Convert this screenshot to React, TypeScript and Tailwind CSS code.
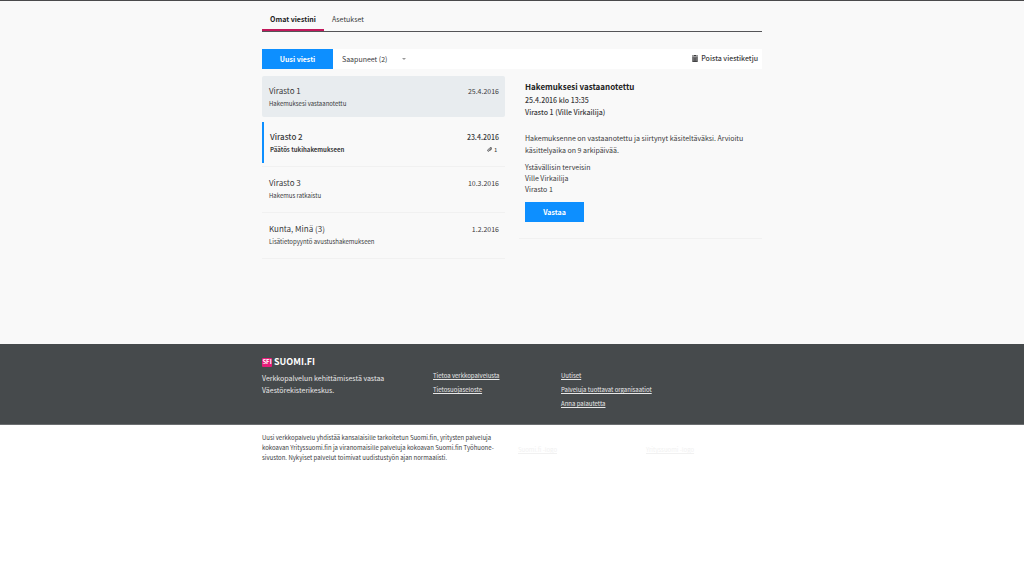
import { useState } from 'react';
import clsx from 'clsx';

interface Message {
    id: number;
    sender: string;
    subject: string;
    date: string;
    unread?: boolean;
    attachments?: number;
}

const messages: Message[] = [
    { id: 1, sender: 'Virasto 1', subject: 'Hakemuksesi vastaanotettu', date: '25.4.2016' },
    { id: 2, sender: 'Virasto 2', subject: 'Päätös tukihakemukseen', date: '23.4.2016', unread: true, attachments: 1 },
    { id: 3, sender: 'Virasto 3', subject: 'Hakemus ratkaistu', date: '10.3.2016' },
    { id: 4, sender: 'Kunta, Minä (3)', subject: 'Lisätietopyyntö avustushakemukseen', date: '1.2.2016' },
];

function TrashIcon() {
    return (
        <svg viewBox="0 0 12 14" className="h-[7px] w-[6px]" fill="currentColor" aria-hidden="true">
            <path d="M4 0h4v1h4v2H0V1h4z" />
            <path d="M1 4h10v10H1z" opacity="0.65" />
            <path d="M1 4h1.5v10H1zM9.5 4H11v10H9.5zM1 12.6h10V14H1zM4.3 5h1v8h-1zM6.8 5h1v8h-1z" />
        </svg>
    );
}

function ClipIcon() {
    return (
        <svg viewBox="0 0 12 12" className="size-[5px]" fill="none" stroke="currentColor" strokeWidth="1.6" aria-hidden="true">
            <path d="M3 8.5 8 3.2c1.2-1.1 2.7.3 1.7 1.5L5 9.8c-2 1.9-4.9-.7-3-2.8L7 1.7c2.6-2.4 6 .9 3.8 3.4L7 9" />
        </svg>
    );
}

function Logo() {
    return (
        <a href="#" className="flex h-3 items-center gap-[2px] font-bold text-white" aria-label="Suomi.fi">
            <span className="flex h-[9px] w-[10px] items-center justify-center rounded-[1px] bg-[#e61c78] text-[6px] leading-none">
                SFI
            </span>
            <span className="text-[9px] leading-3">SUOMI.FI</span>
        </a>
    );
}

function MessageRow({ message, selected, onSelect }: { message: Message; selected: boolean; onSelect: () => void }) {
    return (
        <li className={clsx('border-b py-px', selected ? 'border-transparent' : 'border-[#f1f1f1]')}>
            <button
                onClick={onSelect}
                className={clsx(
                    'mb-[2px] flex h-[41px] w-full justify-between rounded-[2px] pr-[6px] text-left',
                    selected && 'bg-[#e8ecef]',
                    message.unread ? 'rounded-none border-l-2 border-[#0d8fff] pl-[6px] font-medium' : 'pl-[7px]',
                )}
            >
                <span className="flex flex-col pt-2">
                    <span className="text-[8px] leading-[14px]">{message.sender}</span>
                    <span className={clsx('text-[6px] leading-3', message.unread && 'font-bold')}>{message.subject}</span>
                </span>
                <span className="flex flex-col items-end pt-2">
                    <span className="text-[7px] leading-[14px]">{message.date}</span>
                    {message.attachments && (
                        <span className="flex items-center gap-[2px] pr-[2px] text-[5px] leading-[11px]">
                            <ClipIcon />
                            {message.attachments}
                        </span>
                    )}
                </span>
            </button>
        </li>
    );
}

export default function App() {
    const [selectedId, setSelectedId] = useState(1);

    return (
        <div className="min-h-screen bg-white font-['Noto_Sans_CJK_JP',sans-serif] text-[7px] leading-3 text-[#3a3a3c]">
            <main className="min-h-[344px] border-t border-[#4a4a4c] bg-[#f9f9f9]">
                <div className="mx-auto max-w-[500px]">
                    <nav className="flex h-[31px] border-b border-[#555558]">
                        <a href="#" className="border-b-2 border-[#c2185b] px-2 pt-3 font-bold text-[#222]">
                            Omat viestini
                        </a>
                        <a href="#" className="px-2 pt-3">
                            Asetukset
                        </a>
                    </nav>

                    <div className="mt-[17px] flex h-5 items-center bg-white">
                        <button className="h-5 w-[71px] bg-[#0d8fff] font-bold text-white">Uusi viesti</button>
                        <div className="relative ml-2 flex items-center">
                            <select aria-label="Kansio" className="w-[67px] appearance-none bg-transparent pl-px">
                                <option>Saapuneet (2)</option>
                                <option>Lähetetyt</option>
                            </select>
                            <svg viewBox="0 0 8 4" className="pointer-events-none absolute right-[2px] h-[2px] w-1" fill="#999" aria-hidden="true">
                                <path d="M0 0h8L4 4z" />
                            </svg>
                        </div>
                        <button className="mr-1 mb-[2px] ml-auto flex items-center gap-[3px] font-medium">
                            <TrashIcon />
                            Poista viestiketju
                        </button>
                    </div>

                    <div className="mt-[6px] grid grid-cols-[243px_1fr] gap-[14px]">
                        <ul>
                            {messages.map((message) => (
                                <MessageRow
                                    key={message.id}
                                    message={message}
                                    selected={message.id === selectedId}
                                    onSelect={() => setSelectedId(message.id)}
                                />
                            ))}
                        </ul>

                        <article className="self-start border-b border-[#f1f1f1] pt-[5px] pb-4 pl-[6px]">
                            <h1 className="text-[8px] leading-[14px] font-bold text-[#222]">Hakemuksesi vastaanotettu</h1>
                            <p className="font-medium">25.4.2016 klo 13:35</p>
                            <p className="font-medium">Virasto 1 (Ville Virkailija)</p>
                            <p className="mt-[14px]">
                                Hakemuksenne on vastaanotettu ja siirtynyt käsiteltäväksi. Arvioitu käsittelyaika on 9 arkipäivää.
                            </p>
                            <p className="mt-[6px] leading-[11px]">
                                Ystävällisin terveisin
                                <br />
                                Ville Virkailija
                                <br />
                                Virasto 1
                            </p>
                            <button className="mt-[7px] block h-5 w-[59px] bg-[#0d8fff] font-bold text-white">Vastaa</button>
                        </article>
                    </div>
                </div>
            </main>

            <footer>
                <div className="min-h-[81px] border-b border-[#6b6e70] bg-[#464a4c] pt-3 text-[#e8e8e8]">
                    <div className="mx-auto grid max-w-[500px] grid-cols-[171px_128px_1fr]">
                        <div>
                            <Logo />
                            <p className="mt-1 w-[140px]">Verkkopalvelun kehittämisestä vastaa Väestörekisterikeskus.</p>
                        </div>
                        <ul className="mt-[13px] text-[6px] leading-[14px] underline">
                            <li><a href="#">Tietoa verkkopalvelusta</a></li>
                            <li><a href="#">Tietosuojaseloste</a></li>
                        </ul>
                        <ul className="mt-[13px] text-[6px] leading-[14px] underline">
                            <li><a href="#">Uutiset</a></li>
                            <li><a href="#">Palveluja tuottavat organisaatiot</a></li>
                            <li><a href="#">Anna palautetta</a></li>
                        </ul>
                    </div>
                </div>

                <div className="mx-auto grid max-w-[500px] grid-cols-[256px_128px_1fr] pt-2 text-[6px] leading-[10px]">
                    <p>
                        Uusi verkkopalvelu yhdistää kansalaisille tarkoitetun Suomi.fin, yritysten palveluja
                        <br />
                        kokoavan Yrityssuomi.fin ja viranomaisille palveluja kokoavan Suomi.fin Työhuone-
                        <br />
                        sivuston. Nykyiset palvelut toimivat uudistustyön ajan normaalisti.
                    </p>
                    <a href="#" className="mt-3 text-[#f1f1f1] underline">Suomi.fi -logo</a>
                    <a href="#" className="mt-3 text-[#f1f1f1] underline">Yrityssuomi -logo</a>
                </div>
            </footer>
        </div>
    );
}
